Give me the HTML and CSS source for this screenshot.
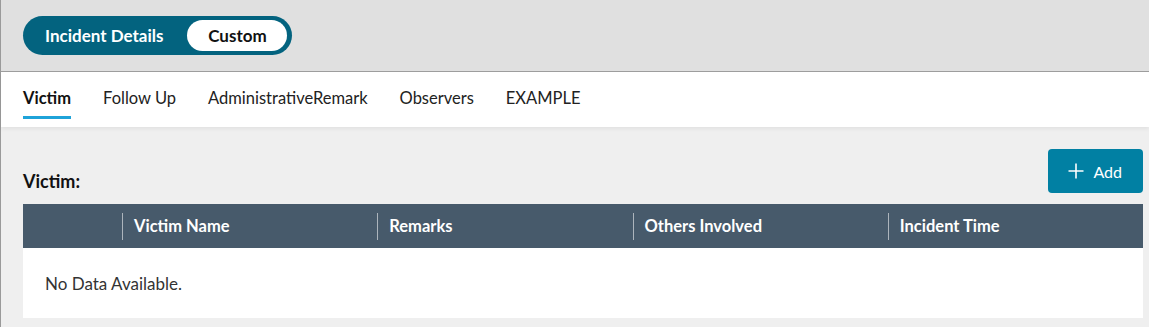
FILE: index.html
```html
<!DOCTYPE html>
<html>
<head>
<meta charset="utf-8" />
<meta name="viewport" content="width=device-width, initial-scale=1.0">
<link rel="stylesheet" href="styles.css">
</head>
<body>
<div class="page">
  <header class="topbar">
    <div class="switch">
      <span class="switch-item">Incident Details</span>
      <span class="switch-item active">Custom</span>
    </div>
  </header>
  <nav class="tabs">
    <a href="#" class="tab active">Victim</a>
    <a href="#" class="tab">Follow Up</a>
    <a href="#" class="tab">AdministrativeRemark</a>
    <a href="#" class="tab">Observers</a>
    <a href="#" class="tab">EXAMPLE</a>
  </nav>
  <main class="content">
    <div class="section-head">
      <h4 class="section-title">Victim:</h4>
      <a href="#" class="btn btn-add" role="button">
        <svg class="icon" width="16" height="16" viewBox="0 0 16 16"><path d="M8 0.5v15M0.5 8h15" stroke="currentColor" stroke-width="1.6" fill="none"/></svg>
        <span>Add</span>
      </a>
    </div>
    <div class="grid">
      <div class="grid-head">
        <div class="cell"></div>
        <div class="cell">Victim Name</div>
        <div class="cell">Remarks</div>
        <div class="cell">Others Involved</div>
        <div class="cell">Incident Time</div>
      </div>
      <div class="grid-empty">No Data Available.</div>
    </div>
  </main>
</div>
</body>
</html>
```
FILE: styles.css
```css
:root {--brand: #03637f; --accent: #1fa3d9; --btn-bg: #0180a3; --head-bg: #475a6b; --text: #222; --font: Lato, 'Liberation Sans', sans-serif;}
html, body {margin: 0; height: 100%;}
body {font-family: var(--font); color: var(--text); background-color: #efefef;}
a {text-decoration: none; color: inherit;}
.page {min-height: 100%; border-left: 1px solid #9a9a9a; box-sizing: border-box;}
.topbar {height: 72px; box-sizing: border-box; padding: 16px 22px; background-color: #e0e0e0; border-bottom: 1px solid #9e9e9e;}
.switch {display: inline-flex; align-items: center; height: 39px; box-sizing: border-box; padding: 4px 5px 4px 0; border-radius: 20px; background-color: var(--brand);}
.switch-item {font-size: 17px; font-weight: 700; color: #fff; padding: 0 24px 0 22px; line-height: 31px;}
.switch-item.active {background-color: #fff; color: #111; border-radius: 16px; width: 100px; box-sizing: border-box; padding: 0; text-align: center;}
.tabs {display: flex; gap: 32px; height: 55px; box-sizing: border-box; padding: 0 22px; background-color: #fff; box-shadow: 0 2px 4px rgba(0, 0, 0, 0.06); position: relative;}
.tab {display: flex; align-items: center; font-size: 16.5px; color: #222; padding-top: 8px; border-bottom: 3px solid transparent; margin-bottom: 8px;}
.tab.active {font-weight: 700; color: #111; border-bottom-color: var(--accent);}
.content {padding: 22px 6px 9px 22px;}
.section-head {display: flex; justify-content: space-between; align-items: flex-end; margin-bottom: 11px;}
.section-title {margin: 0; font-size: 18px; font-weight: 700; line-height: 24px; color: #111;}
.btn {display: inline-flex; align-items: center; gap: 9px; height: 44px; box-sizing: border-box; padding: 0 21px 0 20px; border-radius: 4px; font-size: 16px; color: #fff; background-color: var(--btn-bg);}
.btn-add .icon {display: block;}
.grid {background-color: #fff;}
.grid-head {display: grid; grid-template-columns: 99px repeat(4, 1fr); align-items: center; height: 44px; background-color: var(--head-bg); color: #fff;}
.grid-head .cell {font-size: 16.5px; font-weight: 700; padding-left: 11px; line-height: 27px; border-left: 1px solid rgba(255, 255, 255, 0.55);}
.grid-head .cell:first-child {border-left: 0;}
.grid-empty {height: 70px; display: flex; align-items: center; padding-left: 22px; font-size: 17px; color: #333;}
```
